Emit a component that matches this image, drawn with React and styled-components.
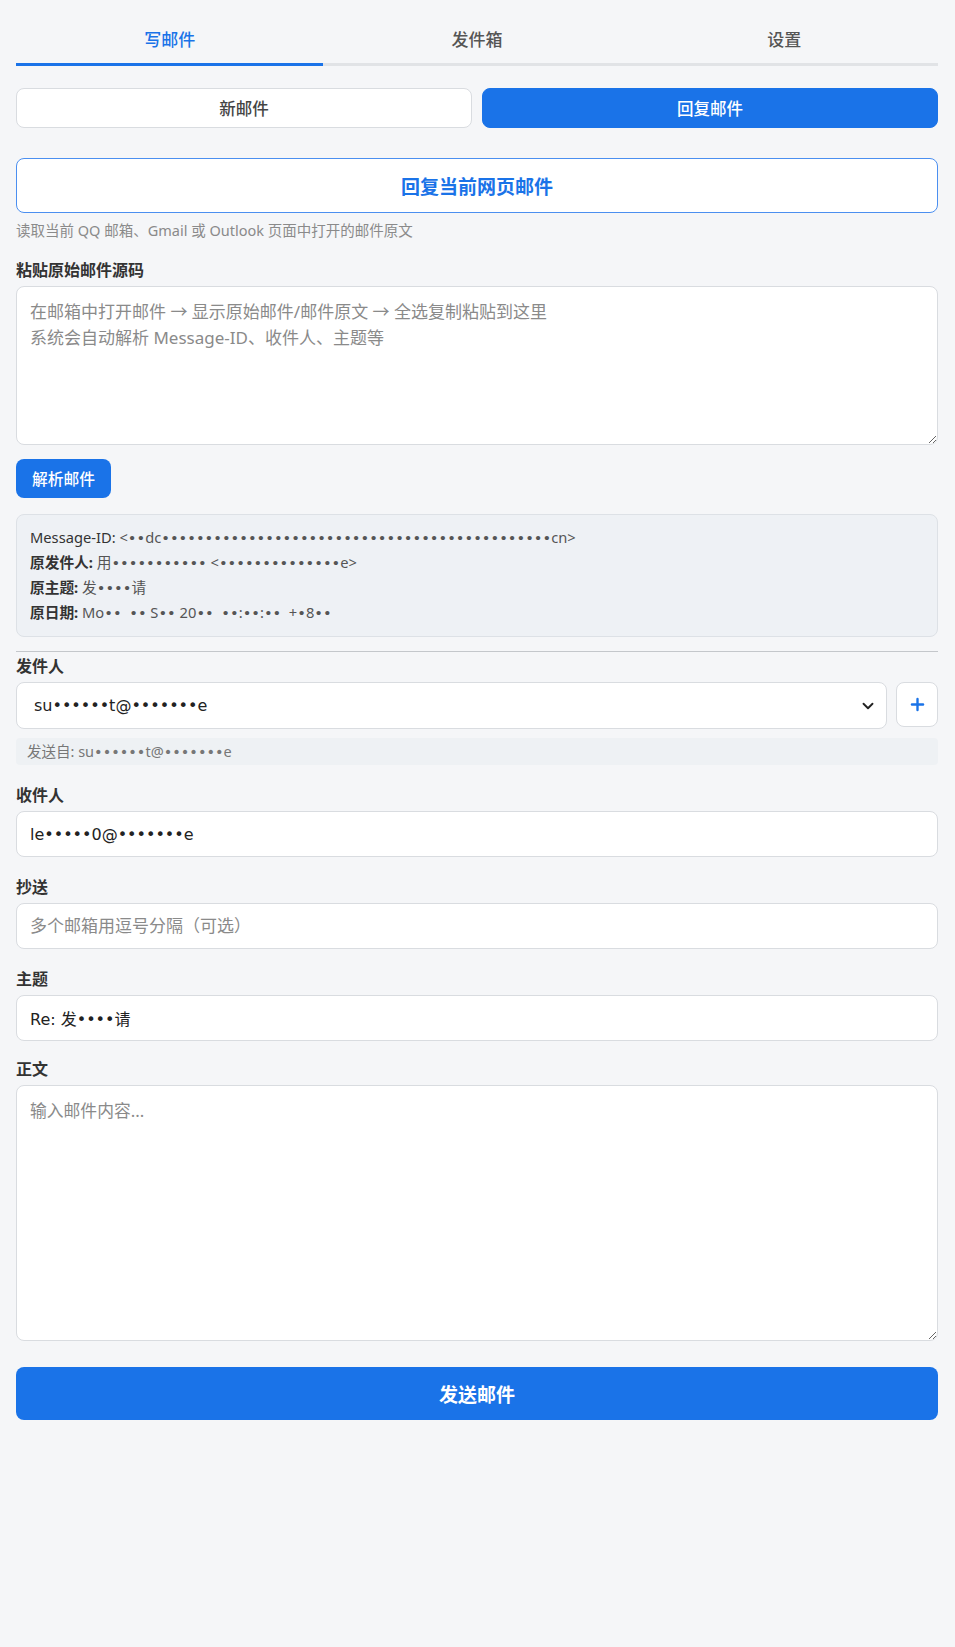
import React, { useState } from 'react'
import styled, { createGlobalStyle } from 'styled-components'
import { ChevronDown, Plus } from 'lucide-react'

const BLUE = '#1a73e8'
// masked values use DejaVu so the bullets come out round and wide like the original
const MASK_FONT = '"DejaVu Sans", "Noto Sans CJK SC", sans-serif'

const GlobalStyle = createGlobalStyle`
  html, body {
    margin: 0;
    background: #f5f6f8;
  }
  body {
    font-family: "Noto Sans", "Noto Sans CJK SC", sans-serif;
    color: #333;
    min-height: 100vh;
  }
  * { box-sizing: border-box; }
`

const Page = styled.div`
  padding: 16px 17px 40px 16px;
`

const Tabs = styled.div`
  display: flex;
`

const Tab = styled.div`
  flex: 1;
  text-align: center;
  font-size: 17px;
  line-height: 20px;
  font-weight: 500;
  padding: 14px 0 13px;
  color: ${p => (p.$active ? BLUE : '#555')};
  border-bottom: 3px solid ${p => (p.$active ? BLUE : '#e1e3e6')};
`

const ModeRow = styled.div`
  display: flex;
  gap: 10px;
  margin-top: 22px;
`

const ModeButton = styled.button`
  flex: 1;
  height: 40px;
  border-radius: 8px;
  font-family: inherit;
  font-size: 16.5px;
  font-weight: 500;
  border: 1px solid ${p => (p.$active ? BLUE : '#d9dce0')};
  background: ${p => (p.$active ? BLUE : '#fff')};
  color: ${p => (p.$active ? '#fff' : '#444')};
`

const ReplyPageButton = styled.button`
  display: block;
  width: 100%;
  height: 55px;
  margin-top: 30px;
  border: 1px solid #4b8ff0;
  border-radius: 8px;
  background: #fff;
  color: ${BLUE};
  font-family: inherit;
  font-size: 19px;
  font-weight: 700;
`

const Hint = styled.div`
  margin-top: 8px;
  font-size: 14.5px;
  line-height: 18px;
  color: #8a8a8a;
`

const Field = styled.div`
  margin-top: ${p => p.$gap || 20}px;
`

const Label = styled.div`
  font-size: 16px;
  line-height: 20px;
  font-weight: 700;
  color: #333;
  margin-bottom: 6px;
`

const TextArea = styled.textarea`
  display: block;
  width: 100%;
  height: ${p => p.$h}px;
  padding: ${p => p.$pad};
  border: 1px solid #d9dce0;
  border-radius: 8px;
  background: #fff;
  font-family: inherit;
  font-size: ${p => p.$fs}px;
  line-height: ${p => p.$lh}px;
  color: #333;
  resize: vertical;
  &::placeholder { color: #8a8a8a; }
`

const SmallButton = styled.button`
  margin-top: 14px;
  height: 39px;
  padding: 0 16px;
  border: none;
  border-radius: 8px;
  background: ${BLUE};
  color: #fff;
  font-family: inherit;
  font-size: 15.75px;
  font-weight: 500;
`

const InfoBox = styled.div`
  margin-top: 16px;
  padding: 10px 13px 11px;
  background: #eef1f5;
  border: 1px solid #dde1e6;
  border-radius: 8px;
  font-size: 14.7px;
  line-height: 25px;
  color: #555;
`

const InfoLine = styled.div`
  white-space: pre;
  overflow: hidden;
`

const InfoKey = styled.span`
  color: #333;
  font-weight: ${p => (p.$plain ? 400 : 700)};
`

const Dots = styled.span`
  font-family: ${MASK_FONT};
`

const Divider = styled.hr`
  margin: 14px 0 0;
  border: none;
  border-top: 1.5px solid #c4c7cb;
`

const SelectRow = styled.div`
  display: flex;
  gap: 9px;
`

const SelectWrap = styled.div`
  position: relative;
  flex: 1;
`

const Select = styled.select`
  appearance: none;
  width: 100%;
  height: 47px;
  padding: 0 36px 0 17px;
  border: 1px solid #d9dce0;
  border-radius: 8px;
  background: #fff;
  font-family: ${MASK_FONT};
  font-size: 16px;
  color: #222;
`

const Chevron = styled.span`
  position: absolute;
  right: 10px;
  top: 50%;
  transform: translateY(-50%);
  display: flex;
  color: #222;
  pointer-events: none;
`

const AddButton = styled.button`
  width: 42px;
  height: 45px;
  border: 1px solid #d9dce0;
  border-radius: 8px;
  background: #fff;
  display: flex;
  align-items: center;
  justify-content: center;
  color: ${BLUE};
  padding: 0;
`

const FromNote = styled.div`
  margin-top: 9px;
  height: 27px;
  padding: 0 11px;
  background: #eef1f4;
  border-radius: 4px;
  font-size: 14.5px;
  line-height: 27px;
  color: #777;
`

const Input = styled.input`
  display: block;
  width: 100%;
  height: 46px;
  padding: 0 13px;
  border: 1px solid #d9dce0;
  border-radius: 8px;
  background: #fff;
  font-family: ${MASK_FONT};
  font-size: 16px;
  color: #222;
  &::placeholder {
    font-family: "Noto Sans", "Noto Sans CJK SC", sans-serif;
    font-size: 17px;
    color: #8a8a8a;
  }
`

const SendButton = styled.button`
  display: block;
  width: 100%;
  height: 53px;
  margin-top: 26px;
  border: none;
  border-radius: 8px;
  background: ${BLUE};
  color: #fff;
  font-family: inherit;
  font-size: 19px;
  font-weight: 700;
`

const Masked = ({ text }) =>
  text.split(/(•+)/).map((part, i) =>
    part.startsWith('•') ? <Dots key={i}>{part}</Dots> : part
  )

const tabs = ['写邮件', '发件箱', '设置']

const parsed = [
  { key: 'Message-ID:', plain: true, value: '<••dc•••••••••••••••••••••••••••••••••••••••••••••cn>' },
  { key: '原发件人:', value: '用••••••••••• <••••••••••••••e>' },
  { key: '原主题:', value: '发••••请' },
  { key: '原日期:', value: 'Mo••  •• S•• 20••  ••:••:••  +•8••' },
]

export default function App() {
  const [tab, setTab] = useState(0)
  const [mode, setMode] = useState('reply')
  const [to, setTo] = useState('le•••••0@•••••••e')
  const [subject, setSubject] = useState('Re: 发••••请')

  return (
    <>
      <GlobalStyle />
      <Page>
        <Tabs>
          {tabs.map((t, i) => (
            <Tab key={t} $active={tab === i} onClick={() => setTab(i)}>{t}</Tab>
          ))}
        </Tabs>

        <ModeRow>
          <ModeButton $active={mode === 'new'} onClick={() => setMode('new')}>新邮件</ModeButton>
          <ModeButton $active={mode === 'reply'} onClick={() => setMode('reply')}>回复邮件</ModeButton>
        </ModeRow>

        <ReplyPageButton>回复当前网页邮件</ReplyPageButton>
        <Hint>读取当前 QQ 邮箱、Gmail 或 Outlook 页面中打开的邮件原文</Hint>

        <Field $gap={21}>
          <Label>粘贴原始邮件源码</Label>
          <TextArea
            $h={159}
            $pad="12px 13px"
            $fs={17}
            $lh={26}
            placeholder={'在邮箱中打开邮件 → 显示原始邮件/邮件原文 → 全选复制粘贴到这里\n系统会自动解析 Message-ID、收件人、主题等'}
          />
        </Field>
        <SmallButton>解析邮件</SmallButton>

        <InfoBox>
          {parsed.map(row => (
            <InfoLine key={row.key}>
              <InfoKey $plain={row.plain}>{row.key}</InfoKey> <Masked text={row.value} />
            </InfoLine>
          ))}
        </InfoBox>

        <Divider />

        <Field $gap={4}>
          <Label>发件人</Label>
          <SelectRow>
            <SelectWrap>
              <Select defaultValue="a">
                <option value="a">su••••••t@•••••••e</option>
              </Select>
              <Chevron><ChevronDown size={18} strokeWidth={2.5} /></Chevron>
            </SelectWrap>
            <AddButton><Plus size={19} strokeWidth={3} /></AddButton>
          </SelectRow>
          <FromNote>发送自: <Masked text="su••••••t@•••••••e" /></FromNote>
        </Field>

        <Field>
          <Label>收件人</Label>
          <Input value={to} onChange={e => setTo(e.target.value)} />
        </Field>

        <Field>
          <Label>抄送</Label>
          <Input placeholder="多个邮箱用逗号分隔（可选）" />
        </Field>

        <Field>
          <Label>主题</Label>
          <Input value={subject} onChange={e => setSubject(e.target.value)} />
        </Field>

        <Field $gap={18}>
          <Label>正文</Label>
          <TextArea $h={256} $pad="13px 13px" $fs={16.8} $lh={24} placeholder="输入邮件内容..." />
        </Field>

        <SendButton>发送邮件</SendButton>
      </Page>
    </>
  )
}
